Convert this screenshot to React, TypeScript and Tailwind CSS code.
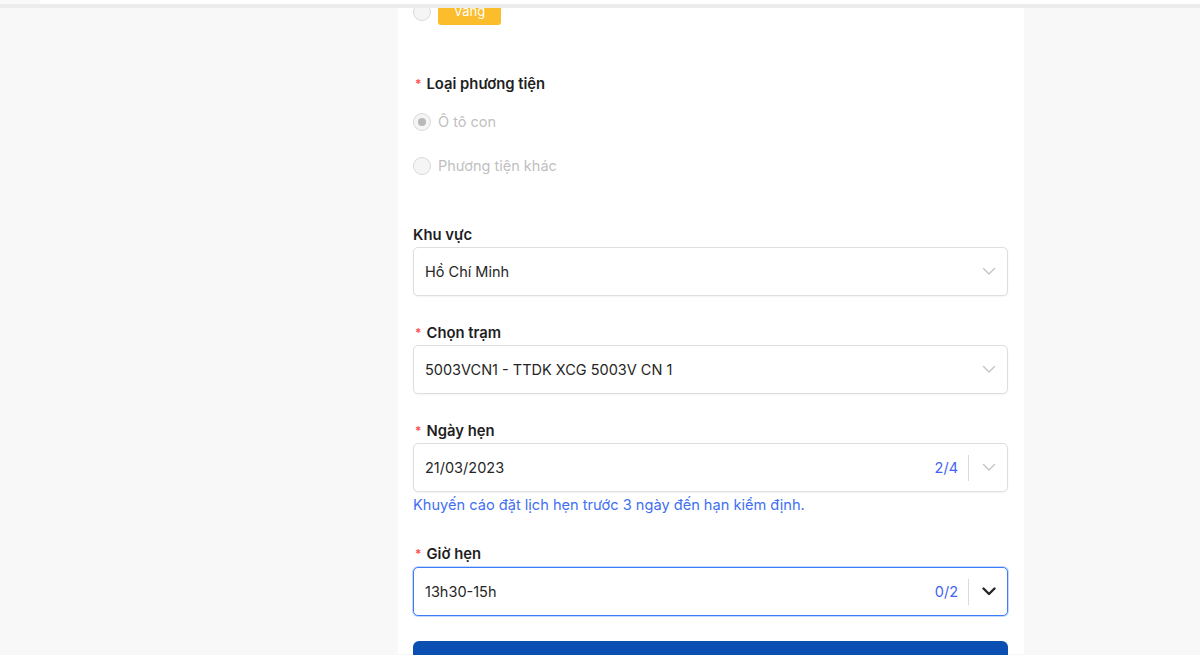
type SelectProps = {
  value: string;
  counter?: string;
  focused?: boolean;
};

function Chevron({ dark }: { dark?: boolean }) {
  return (
    <svg width="14" height="9" viewBox="0 0 14 9" fill="none">
      <polyline
        points="1.5,1.5 7,7 12.5,1.5"
        stroke={dark ? "#262626" : "#c2c2c2"}
        strokeWidth={dark ? 2.4 : 1.3}
        strokeLinecap="round"
        strokeLinejoin="round"
      />
    </svg>
  );
}

function Label({ text, required }: { text: string; required?: boolean }) {
  return (
    <div className="flex h-[22px] items-center text-[14.8px] font-semibold text-[#1f1f1f]">
      {required && <span className="mr-[5px] ml-[2px] text-[12px] leading-none text-[#ff4d4f]">*</span>}
      <span>{text}</span>
    </div>
  );
}

function SelectBox({ value, counter, focused }: SelectProps) {
  return (
    <div
      className={
        focused
          ? "flex h-[49px] items-center rounded-[5px] border border-[#3d7bf7] bg-white pl-[11px] pr-[11px] shadow-[0_0_0_1px_rgba(61,123,247,0.3)]"
          : "flex h-[49px] items-center rounded-[5px] border border-[#dedede] bg-white pl-[11px] pr-[11px] shadow-[0_1px_2px_rgba(0,0,0,0.05)]"
      }
    >
      <span className="flex-1 text-[14.5px] text-[#262626]">{value}</span>
      {counter && (
        <>
          <span className="text-[14.5px] text-[#3f63f2]">{counter}</span>
          <span className="mr-[13px] ml-[10px] h-[26px] w-px bg-[#d9d9d9]" />
        </>
      )}
      <Chevron dark={focused} />
    </div>
  );
}

function Radio({ label, checked }: { label: string; checked?: boolean }) {
  return (
    <div className="flex h-[22px] items-center">
      <span className="flex h-[18px] w-[18px] items-center justify-center rounded-full border border-[#d9d9d9] bg-[#f5f5f5]">
        {checked && <span className="h-[8px] w-[8px] rounded-full bg-[#b8b8b8]" />}
      </span>
      <span className="ml-[7px] text-[14.5px] text-[#bfbfbf]">{label}</span>
    </div>
  );
}

export default function App() {
  return (
    <div
      className="relative h-[655px] w-[1200px] overflow-hidden bg-[#f8f8f8]"
      style={{ fontFamily: "Inter, 'Noto Sans', sans-serif" }}
    >
      {/* sticky header edge */}
      <div className="absolute inset-x-0 top-0 z-10">
        <div className="flex h-[4px]">
          <div className="w-[40px] bg-[#f9f9f9]" />
          <div className="flex-1 bg-white" />
        </div>
        <div className="h-[4px] bg-[#ececec]" />
      </div>

      <div className="ml-[398px] h-full w-[626px] bg-white pl-[15px] pr-[16px]">
        {/* colour option (scrolled) */}
        <div className="-mt-[1px] flex h-[26px] items-center">
          <span className="h-[18px] w-[18px] rounded-full border border-[#d9d9d9] bg-[#f5f5f5]" />
          <span className="ml-[7px] flex h-[26px] w-[63px] items-center justify-center rounded-[3px] bg-[#fbbd2b] text-[13px] text-white">
            Vàng
          </span>
        </div>

        <div className="mt-[48px]">
          <Label text="Loại phương tiện" required />
          <div className="mt-[16px] flex flex-col gap-[22px]">
            <Radio label="Ô tô con" checked />
            <Radio label="Phương tiện khác" />
          </div>
        </div>

        <div className="mt-[47px]">
          <Label text="Khu vực" />
          <div className="mt-[1px]">
            <SelectBox value="Hồ Chí Minh" />
          </div>
        </div>

        <div className="mt-[26px]">
          <Label text="Chọn trạm" required />
          <div className="mt-[1px]">
            <SelectBox value="5003VCN1 - TTDK XCG 5003V CN 1" />
          </div>
        </div>

        <div className="mt-[26px]">
          <Label text="Ngày hẹn" required />
          <div className="mt-[1px]">
            <SelectBox value="21/03/2023" counter="2/4" />
          </div>
          <div className="mt-[3px] flex h-[22px] items-center text-[14.6px] text-[#3f6ff2]">
            Khuyến cáo đặt lịch hẹn trước 3 ngày đến hạn kiểm định.
          </div>
        </div>

        <div className="mt-[26px]">
          <Label text="Giờ hẹn" required />
          <div className="mt-[2px]">
            <SelectBox value="13h30-15h" counter="0/2" focused />
          </div>
        </div>

        {/* submit button, label is below the fold */}
        <div className="mt-[25px] h-[48px] w-full rounded-[6px] bg-[#0c4fb3]" />
      </div>
    </div>
  );
}
